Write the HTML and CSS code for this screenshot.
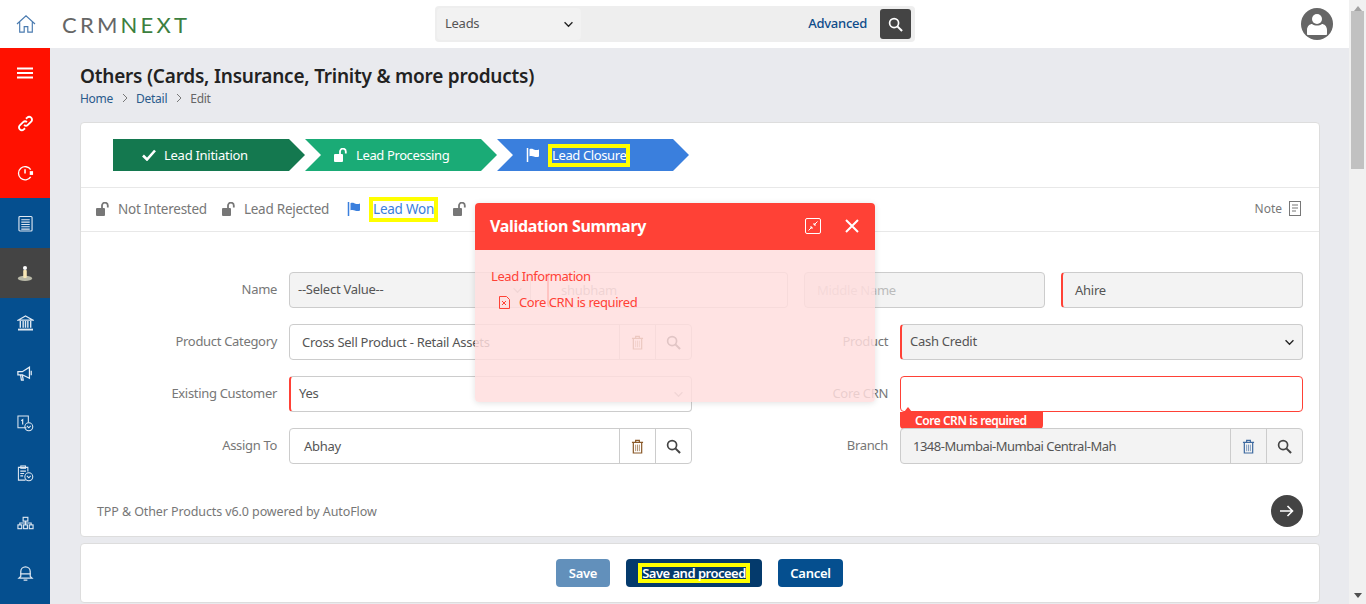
FILE: index.html
```html
<!DOCTYPE html>
<html lang="en">
<head>
    <meta charset="UTF-8">
    <meta name="viewport" content="width=device-width, initial-scale=1.0">
    <title>Others - Edit</title>
    <link rel="stylesheet" href="styles.css">
</head>
<body>

<svg class="sprite" xmlns="http://www.w3.org/2000/svg">
    <symbol id="i-lock" viewBox="0 0 14 14">
        <rect x="0" y="6" width="9" height="8" rx="1" fill="currentColor"/>
        <path d="M6 6V3.600a2.900 2.900 0 0 1 5.800 0V5.500" fill="none" stroke="currentColor" stroke-width="1.800"/>
    </symbol>
    <symbol id="i-flag" viewBox="0 0 14 14">
        <path d="M1.500 0v14" fill="none" stroke="currentColor" stroke-width="1.500"/>
        <path d="M3.500 1.200c2-1 3.500 0 5 .5 1.500.4 3 .3 4.500-.3v7c-1.500.8-3 .8-4.500.3-1.500-.5-3-1.300-5-.4z" fill="currentColor"/>
    </symbol>
    <symbol id="i-trash" viewBox="0 0 14 16">
        <path d="M1 3.500h12M5 3.500V1.500h4v2M2.500 3.500v11.500h9V3.500" fill="none" stroke="currentColor" stroke-width="1.300"/>
        <path d="M5 6v7M7 6v7M9 6v7" fill="none" stroke="currentColor" stroke-width="1" opacity=".7"/>
    </symbol>
    <symbol id="i-search" viewBox="0 0 16 16">
        <circle cx="6.500" cy="6.500" r="4.800" fill="none" stroke="currentColor" stroke-width="1.800"/>
        <path d="M10 10l5 5" fill="none" stroke="currentColor" stroke-width="2.200"/>
    </symbol>
    <symbol id="i-chevron" viewBox="0 0 12 8">
        <path d="M1.500 1.500L6 6l4.500-4.500" fill="none" stroke="currentColor" stroke-width="1.500"/>
    </symbol>
</svg>

<div class="app">
    <div class="page">
        <header class="topbar">
            <div class="brand">
                <svg class="home-icon" viewBox="0 0 22 20" width="20" height="18">
                    <path d="M1 10L11 1l10 9M4 8v11h5v-6h4v6h5V8" fill="none" stroke="#4a7bb0" stroke-width="1.300"/>
                </svg>
                <div class="logo">CRM<span class="logo-next">NEXT</span></div>
            </div>
            <div class="searchbar">
                <div class="search-module">
                    <span>Leads</span>
                    <svg class="chevron" width="11" height="7"><use href="#i-chevron"/></svg>
                </div>
                <a class="search-advanced">Advanced</a>
                <div class="search-btn"><svg width="15" height="15"><use href="#i-search"/></svg></div>
            </div>
            <div class="avatar">
                <svg viewBox="0 0 32 32" width="32" height="32">
                    <circle cx="16" cy="16" r="16" fill="#666"/>
                    <circle cx="16" cy="11" r="5" fill="#fff"/>
                    <path d="M6 26v-4c0-4 3-6 5-6 3 2 7 2 10 0 2 0 5 2 5 6v4c0 .600-.500 1-1 1H7c-.500 0-1-.400-1-1z" fill="#fff"/>
                </svg>
            </div>
        </header>

        <div class="layout">
            <nav class="sidebar">
                <div class="nav-item nav-red">
                    <svg viewBox="0 0 16 12" width="16" height="12"><path d="M0 1.500h16M0 6h16M0 10.500h16" stroke="#fff" stroke-width="2"/></svg>
                </div>
                <div class="nav-item nav-red">
                    <svg viewBox="0 0 18 18" width="17" height="17" fill="none" stroke="#fff" stroke-width="2">
                        <path d="M7.500 10.500c1.500 1.500 3 1 4 0l3.500-3.500c1.200-1.200 1.200-3 0-4.200s-3-1.200-4.200 0L9.500 4"/>
                        <path d="M10.500 7.500c-1.500-1.500-3-1-4 0L3 11c-1.200 1.200-1.200 3 0 4.200s3 1.200 4.200 0L8.500 14"/>
                    </svg>
                </div>
                <div class="nav-item nav-red">
                    <svg viewBox="0 0 18 18" width="17" height="17" fill="none" stroke="#fff" stroke-width="1.400">
                        <path d="M14.500 12.500A7 7 0 1 1 14.500 5"/>
                        <path d="M8.500 4.500v4.500" stroke-width="1.600"/>
                        <rect x="13.500" y="6.500" width="3.500" height="4" fill="#fff" stroke="none"/>
                    </svg>
                </div>
                <div class="nav-item">
                    <svg viewBox="0 0 16 18" width="15" height="17" fill="none" stroke="#dfe8f2" stroke-width="1.200">
                        <rect x="1" y="1.500" width="14" height="15.500" rx="1"/>
                        <path d="M3.500 5h9M3.500 7.500h9M3.500 10h9M3.500 12.500h9M3.500 15h9"/>
                    </svg>
                </div>
                <div class="nav-item nav-active">
                    <svg viewBox="0 0 18 18" width="16" height="17">
                        <ellipse cx="9" cy="14.500" rx="8" ry="3" fill="#b9b9a8"/>
                        <rect x="7" y="5" width="4" height="9" rx="1" fill="#f7e6b5"/>
                        <circle cx="9" cy="2.800" r="2.300" fill="#fff"/>
                    </svg>
                </div>
                <div class="nav-item">
                    <svg viewBox="0 0 18 17" width="17" height="16" fill="none" stroke="#dfe8f2" stroke-width="1.200">
                        <path d="M1 5.500L9 1l8 4.500z"/>
                        <path d="M3.500 6.500v7M6.500 6.500v7M9 6.500v7M11.500 6.500v7M14.500 6.500v7" stroke-width="1.500"/>
                        <path d="M1 15.500h16" stroke-width="2"/>
                    </svg>
                </div>
                <div class="nav-item">
                    <svg viewBox="0 0 18 18" width="16" height="16" fill="none" stroke="#e6eef6" stroke-width="1.400">
                        <path d="M1 7.500v3.500h5l8 4V2.500l-8 5z"/>
                        <path d="M4 11l1 6h2l-1-6M16 6.500v5"/>
                    </svg>
                </div>
                <div class="nav-item">
                    <svg viewBox="0 0 18 18" width="17" height="17" fill="none" stroke="#dfe8f2" stroke-width="1.100">
                        <path d="M10 13.500H1V1h11v7"/>
                        <path d="M4.500 6l1.500-1v5" stroke-width="1.300"/>
                        <circle cx="12.500" cy="12.500" r="4.200"/>
                        <path d="M10.500 11.500l2 2 2-2"/>
                    </svg>
                </div>
                <div class="nav-item">
                    <svg viewBox="0 0 18 18" width="17" height="17" fill="none" stroke="#dfe8f2" stroke-width="1.100">
                        <path d="M9 16H1.500V2.500h10V7"/>
                        <rect x="4" y="1" width="5" height="2.500"/>
                        <path d="M3.500 6.500h6M3.500 9h4M3.500 11.500h3"/>
                        <circle cx="12.500" cy="12.500" r="4.200"/>
                        <path d="M10.500 11.500l2 2 2-2"/>
                    </svg>
                </div>
                <div class="nav-item">
                    <svg viewBox="0 0 18 14" width="17" height="14" fill="none" stroke="#dfe8f2" stroke-width="1.200">
                        <rect x="6.500" y="1" width="5" height="4"/>
                        <rect x="1" y="9" width="4" height="4"/>
                        <rect x="7" y="9" width="4" height="4"/>
                        <rect x="13" y="9" width="4" height="4"/>
                        <path d="M9 5v4M3 9V7h12v2"/>
                    </svg>
                </div>
                <div class="nav-item">
                    <svg viewBox="0 0 18 18" width="17" height="17" fill="none" stroke="#dfe8f2" stroke-width="1.300">
                        <path d="M4 12V7a5 5 0 0 1 10 0v5l2 2H2z"/>
                        <path d="M3.500 9.500h11M7 16h4"/>
                    </svg>
                </div>
            </nav>

            <main class="content">
                <h1 class="page-title">Others (Cards, Insurance, Trinity &amp; more products)</h1>
                <div class="breadcrumb">
                    <a>Home</a>
                    <svg class="crumb-sep" viewBox="0 0 6 10" width="6" height="10"><path d="M1 1l4 4-4 4" fill="none" stroke="#777" stroke-width="1"/></svg>
                    <a>Detail</a>
                    <svg class="crumb-sep" viewBox="0 0 6 10" width="6" height="10"><path d="M1 1l4 4-4 4" fill="none" stroke="#777" stroke-width="1"/></svg>
                    <span>Edit</span>
                </div>

                <section class="card main-card">
                    <div class="stepper">
                        <div class="step step-done">
                            <svg viewBox="0 0 14 12" width="14" height="12"><path d="M1 6.500l4 4 8-9" fill="none" stroke="#fff" stroke-width="2.600"/></svg>
                            <span>Lead Initiation</span>
                        </div>
                        <div class="step step-open">
                            <svg width="14" height="14"><use href="#i-lock"/></svg>
                            <span>Lead Processing</span>
                        </div>
                        <div class="step step-current">
                            <svg width="14" height="14"><use href="#i-flag"/></svg>
                            <span class="marked">Lead Closure</span>
                        </div>
                    </div>

                    <div class="tabs">
                        <div class="tab"><svg width="14" height="14"><use href="#i-lock"/></svg><span>Not Interested</span></div>
                        <div class="tab"><svg width="14" height="14"><use href="#i-lock"/></svg><span>Lead Rejected</span></div>
                        <div class="tab tab-blue"><svg width="14" height="14"><use href="#i-flag"/></svg><span class="marked">Lead Won</span></div>
                        <div class="tab"><svg width="14" height="14"><use href="#i-lock"/></svg></div>
                        <div class="tab-note">
                            <span>Note</span>
                            <svg viewBox="0 0 12 15" width="12" height="15" fill="none" stroke="#777" stroke-width="1"><rect x=".5" y=".5" width="11" height="14"/><path d="M3 4h6M3 7h6M3 10h4"/></svg>
                        </div>
                    </div>

                    <div class="form-grid">
                        <label class="form-label">Name</label>
                        <div class="name-group">
                            <div class="field field-grey field-select pad-8">
                                <span>--Select Value--</span>
                                <svg class="chevron-soft" width="11" height="7"><use href="#i-chevron"/></svg>
                            </div>
                            <div class="field field-req pad-12"><span class="placeholder-dark">shubham</span></div>
                            <div class="field field-grey pad-12"><span class="placeholder">Middle Name</span></div>
                            <div class="field field-grey field-req pad-12"><span>Ahire</span></div>
                        </div>

                        <label class="form-label">Product Category</label>
                        <div class="field field-group">
                            <span class="group-value pad-12">Cross Sell Product - Retail Assets</span>
                            <div class="group-btn btn-trash"><svg width="13" height="15"><use href="#i-trash"/></svg></div>
                            <div class="group-btn"><svg width="15" height="15"><use href="#i-search"/></svg></div>
                        </div>
                        <label class="form-label">Product</label>
                        <div class="field field-grey field-req field-select pad-8">
                            <span>Cash Credit</span>
                            <svg class="chevron" width="11" height="7"><use href="#i-chevron"/></svg>
                        </div>

                        <label class="form-label">Existing Customer</label>
                        <div class="field field-req field-select pad-8">
                            <span>Yes</span>
                            <svg class="chevron-soft" width="11" height="7"><use href="#i-chevron"/></svg>
                        </div>
                        <label class="form-label">Core CRN</label>
                        <div class="field field-error">
                            <div class="error-tip">Core CRN is required</div>
                        </div>

                        <label class="form-label">Assign To</label>
                        <div class="field field-group">
                            <span class="group-value pad-14">Abhay</span>
                            <div class="group-btn btn-trash"><svg width="13" height="15"><use href="#i-trash"/></svg></div>
                            <div class="group-btn"><svg width="15" height="15"><use href="#i-search"/></svg></div>
                        </div>
                        <label class="form-label">Branch</label>
                        <div class="field field-grey field-group">
                            <span class="group-value pad-12 branch-value">1348-Mumbai-Mumbai Central-Mah</span>
                            <div class="group-btn btn-trash-blue"><svg width="13" height="15"><use href="#i-trash"/></svg></div>
                            <div class="group-btn"><svg width="15" height="15"><use href="#i-search"/></svg></div>
                        </div>
                    </div>

                    <div class="card-foot">
                        <span>TPP &amp; Other Products v6.0 powered by AutoFlow</span>
                        <div class="next-btn">
                            <svg viewBox="0 0 14 12" width="14" height="12"><path d="M0 6h12M7.500 1l5 5-5 5" fill="none" stroke="#fff" stroke-width="1.600"/></svg>
                        </div>
                    </div>

                    <div class="modal">
                        <div class="modal-head">
                            <span class="modal-title">Validation Summary</span>
                            <svg class="modal-shrink" viewBox="0 0 16 16" width="16" height="16" fill="none" stroke="#fff" stroke-width="1">
                                <rect x=".5" y=".5" width="15" height="15" rx="1.500"/>
                                <path d="M3.500 12.500l3.500-3.500M5 9h2v2M12.500 3.500L9 7M9 5v2h2"/>
                            </svg>
                            <svg viewBox="0 0 14 14" width="14" height="14"><path d="M1 1l12 12M13 1L1 13" stroke="#fff" stroke-width="2"/></svg>
                        </div>
                        <div class="modal-body">
                            <div>Lead Information</div>
                            <div class="modal-error">
                                <svg viewBox="0 0 11 13" width="11" height="13" fill="none" stroke="#ff4136" stroke-width="1"><path d="M.5.5h7l3 3v9h-10z"/><path d="M3 5l4 4M7 5L3 9"/></svg>
                                <span>Core CRN is required</span>
                            </div>
                        </div>
                    </div>
                </section>

                <section class="card action-card">
                    <button class="btn btn-light">Save</button>
                    <button class="btn btn-dark"><span class="marked marked-btn">Save and proceed</span></button>
                    <button class="btn btn-blue">Cancel</button>
                </section>
            </main>
        </div>
    </div>

    <div class="scrollbar">
        <div class="scroll-up"></div>
        <div class="scroll-thumb"></div>
        <div class="scroll-down"></div>
    </div>
</div>

</body>
</html>
```

FILE: styles.css
```css
* {
    box-sizing: border-box;
}

body {
    font-family: "Noto Sans", "Open Sans", Arial, sans-serif;
    font-size: 13px;
    letter-spacing: -0.27px;
    margin: 0;
    padding: 0;
    color: #555;
    background-color: #e9eaee;
    overflow: hidden;
}

.sprite {
    display: none;
}

.app {
    display: flex;
    height: 604px;
    overflow: hidden;
}

.page {
    flex: 1;
    min-width: 0;
    display: flex;
    flex-direction: column;
}

/* top bar */
.topbar {
    height: 48px;
    flex: none;
    background-color: white;
    display: grid;
    grid-template-columns: 435px 480px 1fr;
    align-items: center;
}

.brand {
    display: flex;
    align-items: center;
    padding-left: 16px;
}

.logo {
    margin-left: 26px;
    font-family: Lato, sans-serif;
    font-weight: 400;
    font-size: 22px;
    letter-spacing: 3.200px;
    color: #666;
}

.logo-next {
    color: #3c7f3f;
}

.searchbar {
    height: 36px;
    background-color: #eee;
    border-radius: 4px;
    display: flex;
    align-items: center;
    padding: 0 4px 0 2px;
}

.search-module {
    width: 144px;
    height: 32px;
    background-color: #f2f2f2;
    border-radius: 4px;
    display: flex;
    align-items: center;
    justify-content: space-between;
    padding: 0 7px 0 8px;
}

.search-module span {
    margin-bottom: 2px;
}

.chevron {
    color: #222;
}

.chevron-soft {
    color: #aaa;
}

.search-advanced {
    margin: 0 13px 2px auto;
    color: #0f4c8a;
    font-weight: 500;
}

.search-btn {
    width: 31px;
    height: 30px;
    background-color: #444;
    border-radius: 3px;
    color: white;
    display: flex;
    align-items: center;
    justify-content: center;
}

.avatar {
    justify-self: end;
    height: 32px;
    margin-right: 16px;
}

/* sidebar */
.layout {
    flex: 1;
    min-height: 0;
    display: flex;
}

.sidebar {
    width: 50px;
    flex: none;
    background-color: #054f8f;
}

.nav-item {
    height: 50px;
    display: flex;
    align-items: center;
    justify-content: center;
}

.nav-red {
    background-color: #ff1100;
}

.nav-active {
    background-color: #444;
}

/* content */
.content {
    flex: 1;
    min-width: 0;
    padding: 14px 29px 0 30px;
    overflow: hidden;
}

.page-title {
    margin: 0;
    font-size: 19px;
    letter-spacing: -0.22px;
    line-height: 28px;
    font-weight: 600;
    color: #222;
}

.breadcrumb {
    display: flex;
    align-items: center;
    gap: 8.500px;
    height: 16px;
    font-size: 12px;
    color: #666;
}

.breadcrumb a {
    color: #2a5a8c;
}

.card {
    background-color: white;
    border: 1px solid #ddd;
    border-radius: 4px;
}

.main-card {
    position: relative;
    margin-top: 16px;
    height: 415px;
}

.stepper {
    height: 65px;
    padding: 16px 0 0 32px;
    border-bottom: 1px solid #e8e8e8;
    display: flex;
}

.step {
    width: 192px;
    height: 32px;
    display: flex;
    align-items: center;
    gap: 8px;
    padding-left: 29px;
    color: white;
    letter-spacing: -0.38px;
    clip-path: polygon(0 0, 176px 0, 192px 16px, 176px 32px, 0 32px, 16px 16px);
}

.step-done {
    background-color: #14784f;
    letter-spacing: -0.27px;
    clip-path: polygon(0 0, 176px 0, 192px 16px, 176px 32px, 0 32px);
}

.step-open {
    background-color: #1aab76;
}

.step-current {
    background-color: #3a7fdd;
}

.marked {
    border: 4px solid #ffff00;
    line-height: 15px;
}

.tabs {
    height: 44px;
    padding: 0 0 2px 15px;
    border-bottom: 1px solid #e8e8e8;
    display: flex;
    align-items: center;
    gap: 15px;
    color: #777;
    font-size: 13.500px;
    letter-spacing: -0.25px;
}

.tab {
    display: flex;
    align-items: center;
    gap: 8px;
    color: #777;
}

.tab-blue {
    margin-left: 3px;
    color: #3a7fdd;
}

.tab-blue .marked {
    margin-top: 2px;
    line-height: 17px;
}

.tab-note {
    margin-left: auto;
    margin-right: 18px;
    display: flex;
    align-items: center;
    gap: 7px;
    font-size: 12px;
    letter-spacing: 0;
}

/* form */
.form-grid {
    padding: 40px 16px 0;
    display: grid;
    grid-template-columns: 180px 403px 184px 403px;
    grid-auto-rows: 36px;
    column-gap: 12px;
    row-gap: 16px;
    align-items: stretch;
}

.form-label {
    align-self: center;
    padding-bottom: 2px;
    text-align: right;
    color: #777;
    letter-spacing: -0.32px;
}

.name-group {
    grid-column: span 3;
    display: grid;
    grid-template-columns: 242px 241px 241px 1fr;
    column-gap: 16px;
}

.field {
    position: relative;
    min-width: 0;
    border: 1px solid #ccc;
    border-radius: 4px;
    background-color: white;
    display: flex;
    align-items: center;
    color: #555;
    white-space: nowrap;
}

.field-grey {
    background-color: #f3f3f3;
}

.field-req {
    border-left: 2px solid #ff4136;
}

.field-select {
    justify-content: space-between;
    padding-right: 7px;
}

.field-select span {
    margin-bottom: 2px;
}

.field-error {
    border-color: #ff4136;
}

.pad-8 {
    padding-left: 8px;
}

.pad-12 {
    padding-left: 12px;
}

.pad-14 {
    padding-left: 14px;
}

.placeholder {
    color: #bbb;
}

.placeholder-dark {
    color: #999;
}

.field-group {
    align-items: stretch;
}

.group-value {
    flex: 1;
    align-self: center;
}

.branch-value {
    letter-spacing: -0.5px;
}

.group-btn {
    width: 36px;
    flex: none;
    border-left: 1px solid #ccc;
    display: flex;
    align-items: center;
    justify-content: center;
    color: #444;
}

.btn-trash {
    color: #8a5a2a;
}

.btn-trash-blue {
    color: #3e6aa0;
}

.error-tip {
    position: absolute;
    left: -1px;
    top: 35px;
    width: 143px;
    height: 17px;
    padding-left: 15px;
    border-radius: 0 0 4px 4px;
    background-color: #ff4136;
    color: white;
    font-size: 12px;
    font-weight: 600;
    letter-spacing: -0.45px;
    line-height: 17px;
}

.error-tip::before {
    content: "";
    position: absolute;
    left: 4px;
    top: -5px;
    border-left: 4px solid transparent;
    border-right: 4px solid transparent;
    border-bottom: 5px solid #ff4136;
}

.card-foot {
    margin-top: 31px;
    padding: 0 16px;
    display: flex;
    align-items: center;
    justify-content: space-between;
    color: #777;
    font-size: 12.500px;
    letter-spacing: -0.1px;
}

.next-btn {
    width: 32px;
    height: 32px;
    border-radius: 50%;
    background-color: #444;
    display: flex;
    align-items: center;
    justify-content: center;
}

/* validation popup */
.modal {
    position: absolute;
    left: 394px;
    top: 80px;
    width: 400px;
    height: 199px;
    border-radius: 4px;
    overflow: hidden;
    box-shadow: 0 1px 6px rgba(0, 0, 0, 0.12);
    display: flex;
    flex-direction: column;
}

.modal-head {
    height: 47px;
    flex: none;
    background-color: #ff4136;
    color: white;
    display: flex;
    align-items: center;
    padding: 0 16px 2px 15px;
}

.modal-title {
    flex: 1;
    font-size: 16px;
    font-weight: 700;
    letter-spacing: -0.3px;
}

.modal-shrink {
    margin-right: 24px;
}

.modal-body {
    flex: 1;
    padding: 17px 16px;
    background-color: rgba(255, 222, 222, 0.84);
    color: #ff4136;
    font-size: 13px;
    letter-spacing: -0.42px;
    line-height: 18px;
}

.modal-error {
    display: flex;
    align-items: center;
    gap: 9px;
    padding-left: 8px;
    margin-top: 8px;
}

/* bottom actions */
.action-card {
    margin-top: 6px;
    height: 60px;
    padding-right: 1px;
    display: flex;
    align-items: center;
    justify-content: center;
    gap: 16px;
}

.btn {
    height: 28px;
    border: none;
    border-radius: 4px;
    color: white;
    font-family: inherit;
    font-size: 13px;
    font-weight: 600;
    letter-spacing: -0.27px;
    padding: 0;
}

.btn-light {
    width: 54px;
    background-color: #6290bb;
}

.btn-dark {
    width: 136px;
    background-color: #043a6c;
}

.btn-blue {
    width: 65px;
    background-color: #054f8f;
}

.marked-btn {
    display: inline-block;
    line-height: 12px;
    letter-spacing: -0.5px;
}

/* fake page scrollbar */
.scrollbar {
    width: 17px;
    flex: none;
    background-color: #f1f1f1;
    display: flex;
    flex-direction: column;
    align-items: center;
    padding: 6px 0;
}

.scroll-up {
    border-left: 4px solid transparent;
    border-right: 4px solid transparent;
    border-bottom: 5px solid #a3a3a3;
}

.scroll-thumb {
    width: 13px;
    height: 158px;
    background-color: #c1c1c1;
}

.scroll-down {
    margin-top: auto;
    border-left: 4px solid transparent;
    border-right: 4px solid transparent;
    border-top: 5px solid #505050;
}
```
